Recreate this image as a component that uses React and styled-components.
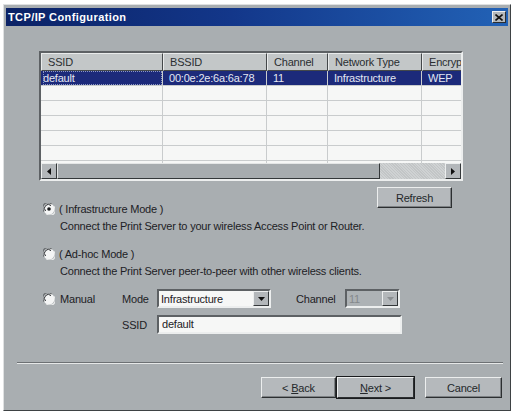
import React from 'react';
import styled, { createGlobalStyle } from 'styled-components';

const GlobalStyle = createGlobalStyle`
  html, body {
    margin: 0;
    background: #ffffff;
  }
  body {
    font-family: 'Liberation Sans', Arial, sans-serif;
    font-size: 11px;
    letter-spacing: -0.2px;
    color: #1d2125;
  }
`;

const columns = [
  { title: 'SSID', width: 122, first: true },
  { title: 'BSSID', width: 104 },
  { title: 'Channel', width: 61 },
  { title: 'Network Type', width: 94 },
  { title: 'Encryption', width: 80 },
];

const networks = [
  { ssid: 'default', bssid: '00:0e:2e:6a:6a:78', channel: '11', type: 'Infrastructure', enc: 'WEP' },
];

const EMPTY_ROWS = 6;

function Radio({ checked }) {
  return (
    <svg width="12" height="12" viewBox="0 0 12 12">
      <circle cx="6" cy="6" r="5.5" fill="#f4f5f5" />
      <path d="M1.2 8.5 A5 5 0 0 1 8.5 1.2" fill="none" stroke="#6a6e71" strokeWidth="1.2" />
      <path d="M2.6 8 A3.6 3.6 0 0 1 8 2.6" fill="none" stroke="#2a2d30" strokeWidth="1" />
      <path d="M10.8 3.5 A5 5 0 0 1 3.5 10.8" fill="none" stroke="#e8eaea" strokeWidth="1.2" />
      {checked && <circle cx="6" cy="6" r="1.8" fill="#1a1c1e" />}
    </svg>
  );
}

function Arrow({ dir = 'down', color = '#111' }) {
  const shapes = {
    down: '0,0 7,0 3.5,4',
    left: '4,0 4,7 0,3.5',
    right: '0,0 0,7 4,3.5',
  };
  const size = dir === 'down' ? { w: 7, h: 4 } : { w: 4, h: 7 };
  return (
    <svg width={size.w} height={size.h} viewBox={`0 0 ${size.w} ${size.h}`}>
      <polygon points={shapes[dir]} fill={color} />
    </svg>
  );
}

function App() {
  return (
    <>
      <GlobalStyle />
      <Window>
        <TitleBar>
          <Title>TCP/IP Configuration</Title>
          <CloseButton>
            <svg width="8" height="7" viewBox="0 0 8 7">
              <path d="M0.5 0.5 L7.5 6.5 M7.5 0.5 L0.5 6.5" stroke="#111" strokeWidth="1.6" />
            </svg>
          </CloseButton>
        </TitleBar>

        <Body>
          <ListView>
            <HeaderRow>
              {columns.map((c) => (
                <HeaderCell key={c.title} $w={c.width}>
                  {c.title}
                </HeaderCell>
              ))}
            </HeaderRow>
            <Rows>
              {networks.map((n) => (
                <Row key={n.bssid} $selected>
                  <Cell $w={columns[0].width} $first>
                    <Focus>{n.ssid}</Focus>
                  </Cell>
                  <Cell $w={columns[1].width}>{n.bssid}</Cell>
                  <Cell $w={columns[2].width}>{n.channel}</Cell>
                  <Cell $w={columns[3].width}>{n.type}</Cell>
                  <Cell $w={columns[4].width}>{n.enc}</Cell>
                </Row>
              ))}
              {Array.from({ length: EMPTY_ROWS }).map((_, i) => (
                <Row key={i}>
                  {columns.map((c) => (
                    <Cell key={c.title} $w={c.width} $first={c.first} />
                  ))}
                </Row>
              ))}
            </Rows>
            <HScrollBar>
              <ScrollArrow>
                <Arrow dir="left" />
              </ScrollArrow>
              <ScrollThumb />
              <ScrollTrack />
              <ScrollArrow>
                <Arrow dir="right" />
              </ScrollArrow>
            </HScrollBar>
          </ListView>

          <ModeArea>
            <Options>
              <Option>
                <Radio checked />
                <span>( Infrastructure Mode )</span>
              </Option>
              <Hint>Connect the Print Server to your wireless Access Point or Router.</Hint>

              <Option $spaced>
                <Radio />
                <span>( Ad-hoc Mode )</span>
              </Option>
              <Hint>Connect the Print Server peer-to-peer with other wireless clients.</Hint>

              <FieldRow $top={11}>
                <ManualLabel>
                  <Radio />
                  <span>Manual</span>
                </ManualLabel>
                <FieldLabel>Mode</FieldLabel>
                <Combo $w={114}>
                  <ComboText>Infrastructure</ComboText>
                  <ComboButton>
                    <Arrow />
                  </ComboButton>
                </Combo>
                <FieldLabel $w={49} $left={25}>
                  Channel
                </FieldLabel>
                <Combo $w={55} $disabled>
                  <ComboText $disabled>11</ComboText>
                  <ComboButton>
                    <Arrow color="#8a8e91" />
                  </ComboButton>
                </Combo>
              </FieldRow>

              <FieldRow $top={7}>
                <ManualLabel />
                <FieldLabel>SSID</FieldLabel>
                <TextInput $w={245}>default</TextInput>
              </FieldRow>
            </Options>
            <RefreshButton $w={75}>Refresh</RefreshButton>
          </ModeArea>
        </Body>

        <Separator />

        <Footer>
          <Button $w={75}>
            &lt;&nbsp;<u>B</u>ack
          </Button>
          <Button $w={77} $default>
            <u>N</u>ext&nbsp;&gt;
          </Button>
          <Button $w={77} $gap={10}>
            Cancel
          </Button>
        </Footer>
      </Window>
    </>
  );
}

const Window = styled.div`
  margin: 4px 0 0 3px;
  width: 508px;
  height: 407px;
  box-sizing: border-box;
  padding: 2px;
  background: #a9aeb1;
  border: 1px solid;
  border-color: #dfe1e2 #3e4244 #3e4244 #dfe1e2;
  display: flex;
  flex-direction: column;
`;

const TitleBar = styled.div`
  height: 18px;
  margin-top: 1px;
  display: flex;
  align-items: center;
  padding: 0 2px;
  background: linear-gradient(90deg, #0b2266 0%, #13378a 45%, #2262b6 100%);
`;

const Title = styled.div`
  flex: 1;
  color: #ffffff;
  font-weight: bold;
  font-size: 11px;
  letter-spacing: 0.4px;
`;

const CloseButton = styled.div`
  width: 14px;
  height: 12px;
  box-sizing: border-box;
  display: flex;
  align-items: center;
  justify-content: center;
  background: #b4b8bb;
  border: 1px solid;
  border-color: #eef0f0 #2c2f31 #2c2f31 #eef0f0;
`;

const Body = styled.div`
  padding: 25px 0 0 33px;
`;

const ListView = styled.div`
  width: 424px;
  height: 130px;
  box-sizing: border-box;
  border: 2px solid;
  border-color: #5d6164 #eceeee #eceeee #5d6164;
  background: #f6f7f6;
  overflow: hidden;
  display: flex;
  flex-direction: column;
`;

const HeaderRow = styled.div`
  display: flex;
  height: 18px;
  flex-shrink: 0;
  background: #c3c7c8;
`;

const HeaderCell = styled.div`
  width: ${(p) => p.$w}px;
  flex-shrink: 0;
  box-sizing: border-box;
  padding-left: 6px;
  line-height: 16px;
  color: #2a2e31;
  border-top: 1px solid #e9ebeb;
  border-left: 1px solid #e9ebeb;
  border-right: 1px solid #44484a;
  border-bottom: 1px solid #44484a;
  white-space: nowrap;
  overflow: hidden;
`;

const Rows = styled.div`
  flex: 1;
  min-height: 0;
  overflow: hidden;
  display: flex;
  flex-direction: column;
`;

const Row = styled.div`
  display: flex;
  height: 15px;
  flex-shrink: 0;
  box-sizing: border-box;
  border-bottom: 1px solid #c9cccd;
  background: ${(p) => (p.$selected ? '#1c2a7a' : 'transparent')};
  color: ${(p) => (p.$selected ? '#e3e7f2' : 'inherit')};
`;

const Cell = styled.div`
  width: ${(p) => p.$w}px;
  flex-shrink: 0;
  box-sizing: border-box;
  padding-left: ${(p) => (p.$first ? 2 : 6)}px;
  line-height: 14px;
  border-right: 1px solid #c9cccd;
  white-space: nowrap;
  overflow: hidden;
`;

const Focus = styled.span`
  display: inline-block;
  width: 100%;
  outline: 1px dotted #8d98c4;
  outline-offset: -1px;
`;

const HScrollBar = styled.div`
  height: 16px;
  flex-shrink: 0;
  display: flex;
  background: #c7cacb;
`;

const ScrollArrow = styled.div`
  width: 16px;
  height: 16px;
  box-sizing: border-box;
  display: flex;
  align-items: center;
  justify-content: center;
  background: #b3b7ba;
  border: 1px solid;
  border-color: #eceeee #34383a #34383a #eceeee;
`;

const ScrollThumb = styled.div`
  width: 323px;
  box-sizing: border-box;
  background: #a7acaf;
  border: 1px solid;
  border-color: #e4e6e6 #34383a #34383a #e4e6e6;
`;

const ScrollTrack = styled.div`
  flex: 1;
  background: repeating-linear-gradient(45deg, #cfd2d3 0 1px, #c2c5c6 1px 2px);
`;

const ModeArea = styled.div`
  width: 424px;
  display: flex;
  align-items: flex-start;
  margin-top: 6px;
`;

const Options = styled.div`
  flex: 1;
  min-width: 0;
  padding: 15px 0 0 4px;
`;

const Option = styled.div`
  display: flex;
  align-items: center;
  gap: 4px;
  height: 14px;
  margin-top: ${(p) => (p.$spaced ? 14 : 0)}px;
`;

const Hint = styled.div`
  margin: 3px 0 0 17px;
  height: 14px;
  line-height: 14px;
  white-space: nowrap;
`;

const FieldRow = styled.div`
  display: flex;
  align-items: center;
  height: 19px;
  margin-top: ${(p) => p.$top}px;
`;

const ManualLabel = styled.div`
  width: 79px;
  flex-shrink: 0;
  display: flex;
  align-items: center;
  gap: 5px;
`;

const FieldLabel = styled.div`
  width: ${(p) => p.$w || 35}px;
  margin-left: ${(p) => p.$left || 0}px;
  flex-shrink: 0;
`;

const Combo = styled.div`
  width: ${(p) => p.$w}px;
  height: 19px;
  flex-shrink: 0;
  box-sizing: border-box;
  display: flex;
  align-items: center;
  border: 2px solid;
  border-color: #5d6164 #eceeee #eceeee #5d6164;
  background: ${(p) => (p.$disabled ? '#adb2b5' : '#f6f7f6')};
`;

const ComboText = styled.div`
  flex: 1;
  padding-left: 2px;
  color: ${(p) => (p.$disabled ? '#84898c' : 'inherit')};
  white-space: nowrap;
  overflow: hidden;
`;

const ComboButton = styled.div`
  width: 16px;
  height: 15px;
  box-sizing: border-box;
  display: flex;
  align-items: center;
  justify-content: center;
  background: #b3b7ba;
  border: 1px solid;
  border-color: #eceeee #34383a #34383a #eceeee;
`;

const TextInput = styled.div`
  width: ${(p) => p.$w}px;
  height: 19px;
  flex-shrink: 0;
  box-sizing: border-box;
  padding-left: 3px;
  line-height: 15px;
  border: 2px solid;
  border-color: #5d6164 #eceeee #eceeee #5d6164;
  background: #f6f7f6;
`;

const Button = styled.div`
  width: ${(p) => p.$w}px;
  height: 21px;
  margin-left: ${(p) => p.$gap || 0}px;
  flex-shrink: 0;
  box-sizing: border-box;
  display: flex;
  align-items: center;
  justify-content: center;
  background: #b5b9bc;
  border: 1px solid;
  border-color: #eceeee #2c2f31 #2c2f31 #eceeee;
  box-shadow: ${(p) => (p.$default ? '0 0 0 1px #1a1c1e' : 'inset -1px -1px 0 #7d8184')};
  color: #24282b;

  u {
    text-decoration: underline;
  }
`;

const RefreshButton = styled(Button)`
  margin-right: 11px;
`;

const Separator = styled.div`
  margin: 28px 5px 0 11px;
  height: 0;
  border-top: 1px solid #6d7174;
  border-bottom: 1px solid #e6e8e8;
`;

const Footer = styled.div`
  display: flex;
  justify-content: flex-end;
  margin-top: 13px;
  padding-right: 6px;
  gap: 1px;
`;

export default App;
